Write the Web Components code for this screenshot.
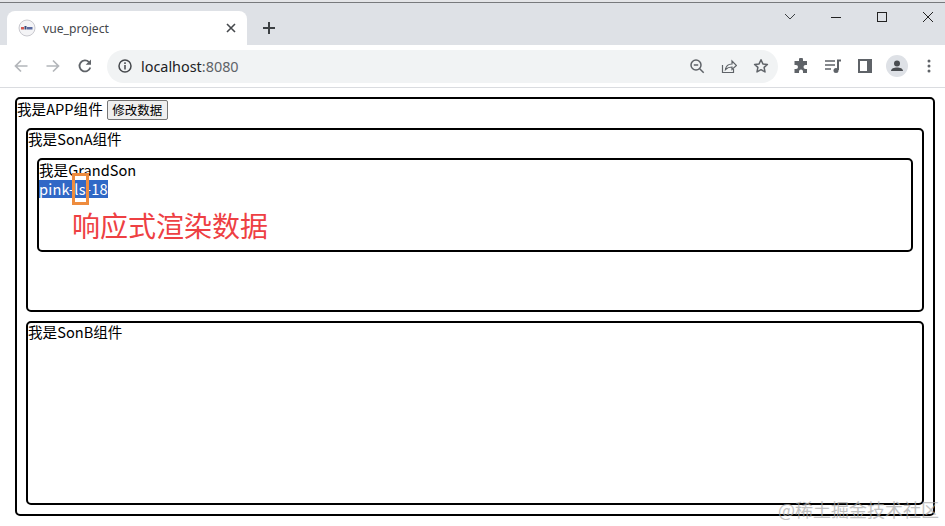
<!DOCTYPE html>
<html>
<head>
<meta charset="utf-8">
<title>vue_project</title>
<style>
  html, body { margin: 0; padding: 0; background: #fff; }
  body { width: 945px; height: 526px; overflow: hidden; position: relative; font-family: "Noto Sans CJK SC", "Noto Sans", sans-serif; }
  .line { font-size: 14.6px; line-height: 19px; height: 19px; }
</style>
</head>
<body>
<browser-frame tab-title="vue_project" host="localhost" port=":8080">
  <demo-box style="--box-margin: 9px 10px 0 15px; --box-height: 419px">
    <div style="display:flex;align-items:center;height:21px;font-size:14.6px;line-height:19px;color:#000">
      <span style="margin-top:-2px">我是APP组件</span><data-button label="修改数据"></data-button>
    </div>
    <demo-box style="--box-margin: 8px 9px 0 9px; --box-height: 184px">
      <div class="line" style="margin-top:-1px">我是SonA组件</div>
      <demo-box style="--box-margin: 10px 9px 0 9px; --box-height: 94px">
        <div class="line">我是GrandSon</div>
        <selected-line text="pink-ls-18" style="margin-top:1px"></selected-line>
      </demo-box>
    </demo-box>
    <demo-box style="--box-margin: 9px 9px 0 9px; --box-height: 184px">
      <div class="line" style="margin-top:-1px">我是SonB组件</div>
    </demo-box>
  </demo-box>
</browser-frame>
<note-layer></note-layer>

<script>
class BrowserFrame extends HTMLElement {
  constructor() {
    super();
    this.attachShadow({ mode: "open" });
  }
  connectedCallback() {
    const title = this.getAttribute("tab-title") || "";
    const host = this.getAttribute("host") || "";
    const port = this.getAttribute("port") || "";
    this.shadowRoot.innerHTML = `
      <style>
        :host { display: flex; flex-direction: column; width: 945px; height: 526px; font-family: "Noto Sans", "Noto Sans CJK SC", sans-serif; }
        .top { height: 3px; flex: none; background: linear-gradient(#e4e5e8 0, #e4e5e8 2px, #77797c 2px); }
        .strip { height: 42px; flex: none; background: #dee1e6; display: flex; align-items: flex-end; padding-left: 7px; }
        .tab { width: 240px; height: 34px; box-sizing: border-box; background: #fff; border-radius: 8px 8px 0 0; display: flex; align-items: center; padding: 0 10px 0 11px; font-size: 12.2px; color: #45484c; gap: 7px; }
        .tab span { flex: 1; }
        .plus { margin: 11px 0 4px 10px; width: 24px; height: 24px; display: flex; align-items: center; justify-content: center; align-self: center; }
        .win { margin: 0 -6px 0 auto; display: flex; align-self: flex-start; align-items: center; height: 28px; }
        .win div { width: 46px; height: 28px; display: flex; align-items: center; justify-content: center; }
        .bar { height: 42px; flex: none; background: #fff; display: flex; align-items: center; padding: 0 0 0 5px; border-bottom: 1px solid #dadce0; }
        .nav { width: 32px; height: 32px; display: flex; align-items: center; justify-content: center; flex: none; }
        .omni { width: 671px; height: 33px; margin-left: 6px; border-radius: 17px; background: #f1f3f4; display: flex; align-items: center; padding: 0 9px 0 10px; box-sizing: border-box; font-size: 14.4px; color: #202124; gap: 8px; flex: none; }
        .omni span { flex: 1; }
        .omni span i { font-style: normal; color: #5f6368; }
        .omni svg { flex: none; }
        .tools { display: flex; align-items: center; margin-left: 7px; }
        .page { flex: 1; background: #fff; min-height: 0; }
      </style>
      <div class="top"></div>
      <div class="strip">
        <div class="tab">
          <svg width="18" height="18" viewBox="0 0 18 18"><circle cx="9" cy="9" r="8" fill="#f4f4f6" stroke="#c9c9cf"/><rect x="3" y="8" width="3" height="2.5" fill="#d0574f"/><rect x="6.500" y="7" width="2" height="3.500" fill="#3a4a78"/><rect x="9" y="8" width="5.500" height="2.500" fill="#5a6aa0"/></svg>
          <span>${title}</span>
          <svg width="12" height="12" viewBox="0 0 12 12"><path d="M2 2l8 8M10 2l-8 8" stroke="#45484c" stroke-width="1.600" fill="none"/></svg>
        </div>
        <div class="plus"><svg width="14" height="14" viewBox="0 0 14 14"><path d="M7 1v12M1 7h12" stroke="#3c4043" stroke-width="2" fill="none"/></svg></div>
        <div class="win">
          <div><svg width="12" height="8" viewBox="0 0 12 8"><path d="M1 1l5 5 5-5" stroke="#3c4043" stroke-width="1" fill="none"/></svg></div>
          <div><svg width="12" height="12" viewBox="0 0 12 12"><path d="M1 6.500h10" stroke="#222" stroke-width="1" fill="none"/></svg></div>
          <div><svg width="12" height="12" viewBox="0 0 12 12"><rect x="1.500" y="1.500" width="9" height="9" stroke="#222" fill="none"/></svg></div>
          <div><svg width="12" height="12" viewBox="0 0 12 12"><path d="M1 1l10 10M11 1L1 11" stroke="#222" stroke-width="1" fill="none"/></svg></div>
        </div>
      </div>
      <div class="bar">
        <div class="nav"><svg width="16" height="16" viewBox="0 0 16 16"><path d="M14.500 8H2.500M8 2.500L2.500 8 8 13.500" stroke="#b3b6ba" stroke-width="1.700" fill="none"/></svg></div>
        <div class="nav"><svg width="16" height="16" viewBox="0 0 16 16"><path d="M1.500 8h12M8 2.500L13.500 8 8 13.500" stroke="#b3b6ba" stroke-width="1.700" fill="none"/></svg></div>
        <div class="nav"><svg width="16" height="16" viewBox="0 0 16 16"><path d="M13.300 9.500A5.500 5.500 0 1 1 12 4.100" stroke="#5f6368" stroke-width="1.800" fill="none"/><path d="M14 1.500V6.800H8.700z" fill="#5f6368"/></svg></div>
        <div class="omni">
          <svg width="16" height="16" viewBox="0 0 16 16"><circle cx="8" cy="8" r="6" stroke="#45484c" stroke-width="1.500" fill="none"/><path d="M8 7v4.500M8 4.300v1.600" stroke="#45484c" stroke-width="1.500" fill="none"/></svg>
          <span>${host}<i>${port}</i></span>
          <svg width="16" height="16" viewBox="0 0 16 16" style="margin-right:8px"><circle cx="7" cy="7" r="5" stroke="#5f6368" stroke-width="1.500" fill="none"/><path d="M10.700 10.700l4 4M4.800 7h4.400" stroke="#5f6368" stroke-width="1.500" fill="none"/></svg>
          <svg width="16" height="16" viewBox="0 0 16 16" style="margin-right:8px"><path d="M1.500 7v7.500h11V11" stroke="#5f6368" stroke-width="1.200" fill="none"/><path d="M4.500 11.500c.5-3.500 3-5.500 6.500-5.500V3l4.500 4.500L11 11.500V9c-2.500 0-4.500.5-6.500 2.500z" stroke="#5f6368" stroke-width="1.200" fill="none"/></svg>
          <svg width="16" height="16" viewBox="0 0 16 16"><path d="M8 1.800l1.900 4.100 4.500.5-3.300 3 .9 4.500L8 11.700l-4 2.200.9-4.500-3.300-3 4.500-.5z" stroke="#5f6368" stroke-width="1.500" fill="none" stroke-linejoin="round"/></svg>
        </div>
        <div class="tools">
          <div class="nav"><svg width="16" height="16" viewBox="0 0 16 16"><path d="M6 1.500a2 2 0 0 1 4 0V3h4v4h-1.500a2 2 0 0 0 0 4H14v4H10v-1.500a2 2 0 0 0-4 0V15H1.500v-4H3a2 2 0 0 0 0-4H1.500V3H6z" fill="#5f6368"/></svg></div>
          <div class="nav"><svg width="18" height="16" viewBox="0 0 18 16"><path d="M1 3h10M1 7h10M1 11h6" stroke="#5f6368" stroke-width="1.500" fill="none"/><path d="M14 12V2.500h3" stroke="#5f6368" stroke-width="2" fill="none"/><circle cx="12" cy="12.500" r="2.500" fill="#5f6368"/></svg></div>
          <div class="nav"><svg width="14" height="14" viewBox="0 0 14 14"><path d="M0 0h14v14H0z" fill="#5f6368"/><path d="M2 2h7v10H2z" fill="#fff"/></svg></div>
          <div class="nav"><svg width="22" height="22" viewBox="0 0 22 22"><circle cx="11" cy="11" r="11" fill="#dee1e6"/><circle cx="11" cy="8.500" r="3" fill="#4a4d51"/><path d="M5 16c0-2.500 3-3.500 6-3.500s6 1 6 3.500z" fill="#4a4d51"/></svg></div>
          <div class="nav"><svg width="4" height="14" viewBox="0 0 4 14"><circle cx="2" cy="2" r="1.500" fill="#5f6368"/><circle cx="2" cy="7" r="1.500" fill="#5f6368"/><circle cx="2" cy="12" r="1.500" fill="#5f6368"/></svg></div>
        </div>
      </div>
      <div class="page"><slot></slot></div>
    `;
  }
}

class DemoBox extends HTMLElement {
  constructor() {
    super();
    this.attachShadow({ mode: "open" });
    this.shadowRoot.innerHTML = `
      <style>
        :host {
          display: flow-root;
          box-sizing: border-box;
          margin: var(--box-margin, 0);
          height: var(--box-height, auto);
          border: 2px solid #000;
          border-radius: 5px;
          color: #000;
          font-family: "Noto Sans CJK SC", "Noto Sans", sans-serif;
        }
      </style>
      <slot></slot>
    `;
  }
}

class DataButton extends HTMLElement {
  constructor() {
    super();
    this.attachShadow({ mode: "open" });
  }
  connectedCallback() {
    this.shadowRoot.innerHTML = `
      <style>
        :host { display: inline-flex; margin-left: 4px; }
        button { width: 61px; height: 20px; padding: 0; box-sizing: border-box; background: #efefef; border: 1px solid #767676; border-radius: 2px; font: 12.500px/16px "Noto Sans CJK SC", sans-serif; color: #000; }
      </style>
      <button>${this.getAttribute("label")}</button>
    `;
  }
}

class SelectedLine extends HTMLElement {
  constructor() {
    super();
    this.attachShadow({ mode: "open" });
  }
  connectedCallback() {
    this.shadowRoot.innerHTML = `
      <style>
        :host { display: block; font-size: 14.600px; line-height: 18px; height: 18px; }
        span { background: #3068c6; color: #fff; display: inline-block; height: 18px; letter-spacing: .2px; padding-right: 0; }
      </style>
      <span>${this.getAttribute("text")}</span>
    `;
  }
}

// annotations painted on top of the screenshot
class NoteLayer extends HTMLElement {
  constructor() {
    super();
    this.attachShadow({ mode: "open" });
    this.shadowRoot.innerHTML = `
      <style>
        :host { position: absolute; left: 0; top: 0; width: 945px; height: 526px; pointer-events: none; font-family: "Noto Sans CJK SC", sans-serif; }
        .mark { position: absolute; left: 72px; top: 173px; width: 17px; height: 32px; box-sizing: border-box; border: 3px solid #ee8c3e; }
        .red { position: absolute; left: 72px; top: 206px; font-size: 28px; line-height: 38px; color: #ee4043; white-space: nowrap; }
        .mask { position: absolute; left: 778px; top: 498px; font-size: 18px; line-height: 22px; color: #a9a9a9; white-space: nowrap; opacity: .7; }
      </style>
      <div class="mark"></div>
      <div class="red">响应式渲染数据</div>
      <div class="mask">@稀土掘金技术社区</div>
    `;
  }
}

customElements.define("browser-frame", BrowserFrame);
customElements.define("demo-box", DemoBox);
customElements.define("data-button", DataButton);
customElements.define("selected-line", SelectedLine);
customElements.define("note-layer", NoteLayer);
</script>
</body>
</html>
